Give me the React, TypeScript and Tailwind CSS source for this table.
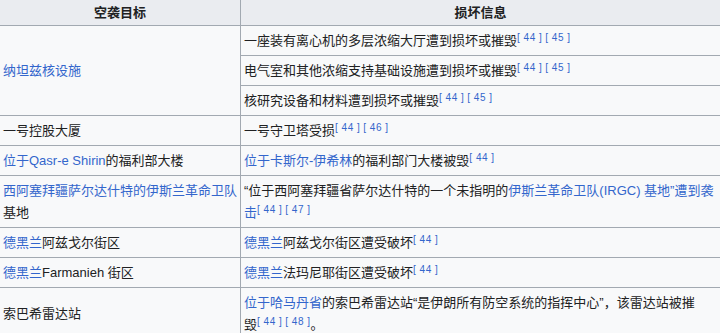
import React from "react";

const FONT = '"Liberation Sans", "Noto Sans CJK SC", sans-serif';

function Ref({ nums, tail }: { nums: string[]; tail?: string }) {
  return (
    <>
      {nums.map((n, i) => (
        <sup
          key={n}
          className={`text-[10px] leading-[13px] text-[#3366cc] align-top relative top-[1px] tracking-[0.5px] ${i > 0 ? "ml-[3px]" : ""}`}
        >
          [ {n} ]
        </sup>
      ))}
      {tail}
    </>
  );
}

const L = ({ children }: { children: React.ReactNode }) => (
  <span className="text-[#3366cc]">{children}</span>
);

const cell = "bg-[#f8f9fa] px-[3px] py-[3.5px] leading-[22px]";

export default function App() {
  return (
    <div
      className="w-[720px] h-[333px] overflow-hidden bg-[#f8f9fa] text-[13px] text-[#202122]"
      style={{ fontFamily: FONT }}
    >
      <div className="grid grid-cols-[240px_1fr] gap-px bg-[#a2a9b1]">
        <div className="bg-[#eaecf0] h-[25px] flex items-center justify-center font-bold">空袭目标</div>
        <div className="bg-[#eaecf0] h-[25px] flex items-center justify-center font-bold">损坏信息</div>

        <div className={`${cell} row-span-3 flex items-center`}>
          <L>纳坦兹核设施</L>
        </div>
        <div className={cell}>
          一座装有离心机的多层浓缩大厅遭到损坏或摧毁<Ref nums={["44", "45"]} />
        </div>
        <div className={cell}>
          电气室和其他浓缩支持基础设施遭到损坏或摧毁<Ref nums={["44", "45"]} />
        </div>
        <div className={cell}>
          核研究设备和材料遭到损坏或摧毁<Ref nums={["44", "45"]} />
        </div>

        <div className={`${cell} flex items-center`}>一号控股大厦</div>
        <div className={cell}>
          一号守卫塔受损<Ref nums={["44", "46"]} />
        </div>

        <div className={`${cell} flex items-center`}>
          <span>
            <L>位于Qasr-e Shirin</L>的福利部大楼
          </span>
        </div>
        <div className={cell}>
          <L>位于卡斯尔-伊希林</L>的福利部门大楼被毁<Ref nums={["44"]} />
        </div>

        <div className={`${cell} flex items-center`}>
          <span>
            <L>西阿塞拜疆萨尔达什特的伊斯兰革命卫队</L>基地
          </span>
        </div>
        <div className={cell}>
          “位于西阿塞拜疆省萨尔达什特的一个未指明的<L>伊斯兰革命卫队(IRGC) 基地”遭到袭</L>
          <span className="whitespace-nowrap">
            <L>击</L>
            <Ref nums={["44", "47"]} />
          </span>
        </div>

        <div className={`${cell} flex items-center`}>
          <span>
            <L>德黑兰</L>阿兹戈尔街区
          </span>
        </div>
        <div className={cell}>
          <L>德黑兰</L>阿兹戈尔街区遭受破坏<Ref nums={["44"]} />
        </div>

        <div className={`${cell} flex items-center`}>
          <span>
            <L>德黑兰</L>Farmanieh 街区
          </span>
        </div>
        <div className={cell}>
          <L>德黑兰</L>法玛尼耶街区遭受破坏<Ref nums={["44"]} />
        </div>

        <div className={`${cell} flex items-center`}>索巴希雷达站</div>
        <div className={cell}>
          <L>位于哈马丹省</L>的索巴希雷达站“是伊朗所有防空系统的指挥中心”，该雷达站被摧
          <span className="whitespace-nowrap">
            毁<Ref nums={["44", "48"]} tail="。" />
          </span>
        </div>
      </div>
    </div>
  );
}
